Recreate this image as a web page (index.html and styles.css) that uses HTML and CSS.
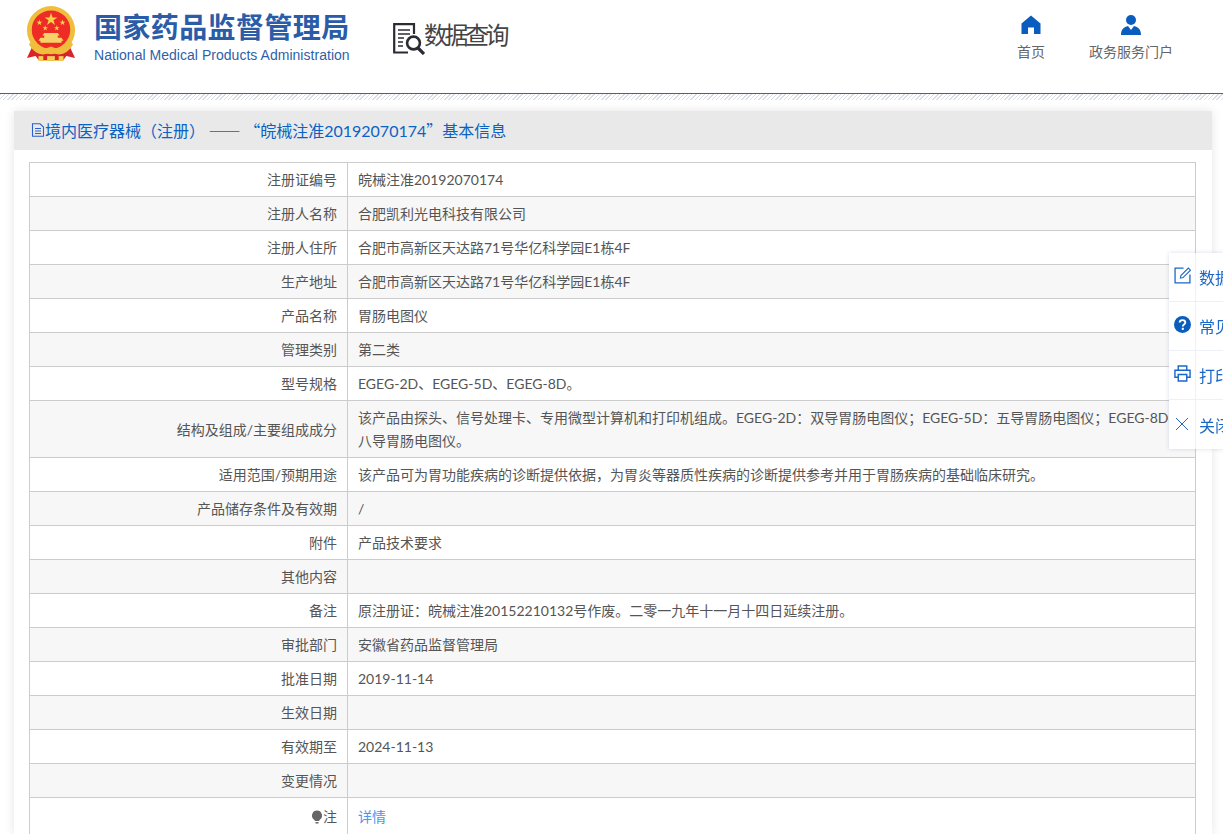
FILE: index.html
```html
<!DOCTYPE html>
<html lang="zh">
<head>
<meta charset="utf-8">
<title>境内医疗器械（注册）</title>
<link rel="stylesheet" href="styles.css">
</head>
<body>
<header class="top">
  <div class="brand">
    <svg class="emblem" viewBox="0 0 52 58" aria-hidden="true">
      <path d="M7 41 L1 54 L10 52 L14 57 L38 57 L42 52 L51 54 L45 41 Z" fill="#d9252a"/>
      <circle cx="26" cy="25" r="25" fill="#f0bd3c"/>
      <circle cx="26" cy="24.5" r="20" fill="#ee2c25"/>
      <path d="M26 7 l1.6 4.8 5 0 -4 3 1.5 4.8 -4.1 -3 -4.1 3 1.5 -4.8 -4 -3 5 0z" fill="#f8d24a"/>
      <path d="M14 14 l.8 2.2 2.3 0 -1.9 1.4 .7 2.2 -1.9 -1.4 -1.9 1.4 .7 -2.2 -1.9 -1.4 2.3 0z M38 14 l.8 2.2 2.3 0 -1.9 1.4 .7 2.2 -1.9 -1.4 -1.9 1.4 .7 -2.2 -1.9 -1.4 2.3 0z M20 20 l.7 2 2.1 0 -1.7 1.3 .6 2 -1.7 -1.2 -1.7 1.2 .6 -2 -1.7 -1.3 2.1 0z M32 20 l.7 2 2.1 0 -1.7 1.3 .6 2 -1.7 -1.2 -1.7 1.2 .6 -2 -1.7 -1.3 2.1 0z" fill="#f8d24a"/>
      <path d="M19 28 h14 l2 2.5 h-2 v2.5 h4 l2 3 h-2 v2 H15 v-2 h-2 l2 -3 h4 v-2.500 h-2z" fill="#f6d268"/>
      <path d="M6 36 Q13 48 26 42 Q39 48 46 36 L49 40 Q40 55 26 48 Q12 55 3 40Z" fill="#f0bd3c"/>
      <path d="M13 52 h26 v5 H13z" fill="#f3cf57"/>
      <path d="M18 52 h4 v4 h-4z M30 52 h4 v4 h-4z" fill="#d9252a"/>
    </svg>
    <div class="brand-text">
      <div class="brand-cn">国家药品监督管理局</div>
      <div class="brand-en">National Medical Products Administration</div>
    </div>
    <div class="query">
      <svg class="query-icon" viewBox="0 0 32 32" aria-hidden="true">
        <path d="M15 29.500 H1.200 V1.200 H21 V11" fill="none" stroke="#2b2b33" stroke-width="2.200"/>
        <path d="M5 7 H17 M5 11 H17 M5 15 H11 M5 19 H10 M5 23 H10" stroke="#2b2b33" stroke-width="1.600" fill="none"/>
        <circle cx="20.500" cy="20" r="6.400" fill="none" stroke="#2b2b33" stroke-width="2.600"/>
        <path d="M25 25 L31 31" stroke="#2b2b33" stroke-width="3.200"/>
      </svg>
      <span class="query-text">数据查询</span>
    </div>
  </div>
  <nav class="nav">
    <a class="nav-item nav-home">
      <svg class="nav-icon" viewBox="0 0 20 20" aria-hidden="true">
        <path d="M10 .5 L19.500 8.500 V19 H13 V12.500 H7 V19 H.5 V8.500 Z" fill="#0a5dbf"/>
      </svg>
      <span>首页</span>
    </a>
    <a class="nav-item nav-portal">
      <svg class="nav-icon" viewBox="0 0 20 20" aria-hidden="true">
        <circle cx="10" cy="5" r="5" fill="#0a5dbf"/>
        <path d="M0 20 C0 14 3 12 7 11 L10 15 L13 11 C17 12 20 14 20 20 Z" fill="#0a5dbf"/>
      </svg>
      <span>政务服务门户</span>
    </a>
  </nav>
</header>
<div class="hatch"></div>
<main class="panel">
  <h2 class="panel-title">
    <svg class="doc-icon" viewBox="0 0 14 14" aria-hidden="true">
      <path d="M1.500 .8 H9 L12.500 4 V13.200 H1.500 Z M4 5.500 H10 M4 8 H10 M4 10.500 H10" fill="none" stroke="#2a62c9" stroke-width="1.100"/>
    </svg><span>境内医疗器械（注册）<span class="cjk"> —— “</span>皖械注准20192070174<span class="cjk">”</span>基本信息</span>
  </h2>
  <div class="table-wrap">
    <table class="info">
      <tbody>
        <tr><th>注册证编号</th><td>皖械注准20192070174</td></tr>
        <tr><th>注册人名称</th><td>合肥凯利光电科技有限公司</td></tr>
        <tr><th>注册人住所</th><td>合肥市高新区天达路71号华亿科学园E1栋4F</td></tr>
        <tr><th>生产地址</th><td>合肥市高新区天达路71号华亿科学园E1栋4F</td></tr>
        <tr><th>产品名称</th><td>胃肠电图仪</td></tr>
        <tr><th>管理类别</th><td>第二类</td></tr>
        <tr><th>型号规格</th><td>EGEG-2D、EGEG-5D、EGEG-8D。</td></tr>
        <tr><th>结构及组成/主要组成成分</th><td>该产品由探头、信号处理卡、专用微型计算机和打印机组成。EGEG-2D：双导胃肠电图仪；EGEG-5D：五导胃肠电图仪；EGEG-8D：八导胃肠电图仪。</td></tr>
        <tr><th>适用范围/预期用途</th><td>该产品可为胃功能疾病的诊断提供依据，为胃炎等器质性疾病的诊断提供参考并用于胃肠疾病的基础临床研究。</td></tr>
        <tr><th>产品储存条件及有效期</th><td>/</td></tr>
        <tr><th>附件</th><td>产品技术要求</td></tr>
        <tr><th>其他内容</th><td></td></tr>
        <tr><th>备注</th><td>原注册证：皖械注准20152210132号作废。二零一九年十一月十四日延续注册。</td></tr>
        <tr><th>审批部门</th><td>安徽省药品监督管理局</td></tr>
        <tr><th>批准日期</th><td>2019-11-14</td></tr>
        <tr><th>生效日期</th><td></td></tr>
        <tr><th>有效期至</th><td>2024-11-13</td></tr>
        <tr><th>变更情况</th><td></td></tr>
        <tr><th><svg class="bulb" viewBox="0 0 12 14" aria-hidden="true"><path d="M6 .5 A5 5 0 0 1 9 9.500 L8 11 H4 L3 9.500 A5 5 0 0 1 6 .5Z M4.500 12 h3 v1.600 h-3z" fill="#666"/></svg>注</th><td><a class="link">详情</a></td></tr>
      </tbody>
    </table>
  </div>
</main>
<aside class="float">
  <a class="float-item">
    <span class="float-icon icon-edit"><svg viewBox="0 0 16 16" aria-hidden="true"><path d="M9 1 H1 V15 H15 V7" fill="none" stroke="#1a66c9" stroke-width="1.200"/><path d="M6 10.500 L6.500 8 L13.500 1 L15.500 3 L8.500 10Z" fill="none" stroke="#1a66c9" stroke-width="1"/></svg></span>
    <span class="float-text">数据</span>
  </a>
  <a class="float-item">
    <span class="float-icon"><svg viewBox="0 0 18 18" aria-hidden="true"><circle cx="9" cy="9" r="9" fill="#0a5dbf"/><path d="M6 7 C6 3.500 12 3.500 12 7 C12 9 9.300 9 9.300 11" fill="none" stroke="#fff" stroke-width="2"/><rect x="8.200" y="12.500" width="2.200" height="2.200" fill="#fff"/></svg></span>
    <span class="float-text">常见</span>
  </a>
  <a class="float-item">
    <span class="float-icon"><svg viewBox="0 0 18 18" aria-hidden="true"><path d="M4.500 5 V1 H13.500 V5 M4 13 H1 V5.500 H17 V13 H14 M4.500 10 H13.500 V17 H4.500Z" fill="none" stroke="#1a66c9" stroke-width="1.500"/></svg></span>
    <span class="float-text">打印</span>
  </a>
  <a class="float-item">
    <span class="float-icon icon-close"><svg viewBox="0 0 14 14" aria-hidden="true"><path d="M1 1 L13 13 M13 1 L1 13" stroke="#2a66c4" stroke-width="1"/></svg></span>
    <span class="float-text">关闭</span>
  </a>
</aside>
</body>
</html>
```
FILE: styles.css
```css
* { box-sizing: border-box; }
html, body { margin: 0; height: 100%; overflow: hidden; background: #fff; }
body { font-family: Lato, "Noto Sans CJK SC", sans-serif; font-size: 14px; color: #555; }

.top { height: 94px; display: flex; justify-content: space-between; border-bottom: 1px solid #2a6ab5; }
.brand { display: flex; align-items: flex-start; padding: 6px 0 0 26px; }
.emblem { width: 50px; height: 56px; flex: none; }
.brand-text { margin-left: 18px; width: 280px; }
.brand-cn { font-family: "Noto Sans CJK SC", sans-serif; font-size: 28px; font-weight: 700; line-height: 40px; letter-spacing: .4px; color: #2a5ca8; white-space: nowrap; }
.brand-en { font-family: "Liberation Sans", Arial, sans-serif; font-size: 14px; line-height: 19px; letter-spacing: .03px; color: #2f5fa9; white-space: nowrap; }
.query { display: flex; align-items: flex-start; margin-left: 19px; padding-top: 13px; }
.query-icon { width: 32px; height: 32px; flex: none; margin-top: 4px; }
.query-text { font-family: "Noto Sans CJK SC", sans-serif; font-size: 24px; line-height: 29px; letter-spacing: -3.5px; margin-left: -1px; color: #444; white-space: nowrap; }

.nav { display: flex; padding: 15px 50px 0 0; }
.nav-item { display: flex; flex-direction: column; align-items: center; font-size: 14px; line-height: 19px; color: #666; }
.nav-home { margin-right: 44px; }
.nav-icon { width: 20px; height: 20px; margin-bottom: 7px; }

.hatch { height: 6px; background: repeating-linear-gradient(135deg, #d8dde6 0 1px, #fff 1px 3px); }

.panel { margin: 11px 11px 0 14px; background: #fff; box-shadow: 0 0 10px rgba(0,0,0,.1); }
.panel-title { height: 39px; margin: 0; padding: 0 0 2px 17px; display: flex; align-items: center; background: #e9e9e9; font-size: 16px; font-weight: 400; color: #0b62c4; white-space: pre; }
.cjk { font-family: "Noto Sans CJK SC", sans-serif; }
.doc-icon { width: 14px; height: 14px; flex: none; }
.table-wrap { padding: 12px 16px 0 15px; }
.info { width: 100%; border-collapse: collapse; table-layout: fixed; }
.info tr:nth-child(even) { background: #f7f7f7; }
.info th, .info td { border: 1px solid #ccc; padding: 5px 10px; line-height: 23px; font-weight: 400; font-size: 14px; vertical-align: middle; }
.info th { width: 318px; text-align: right; }
.info td { text-align: left; height: 34px; }
.info tr:last-child th, .info tr:last-child td { height: 38px; }
.bulb { width: 12px; height: 14px; vertical-align: -2px; }
.link { color: #4b95f0; }

.float { position: fixed; left: 1169px; top: 253px; width: 120px; background: #fff; box-shadow: 0 0 4px rgba(60,80,160,.2); }
.float-item { display: flex; align-items: center; height: 49px; border-bottom: 1px solid #eef0f7; font-size: 16px; color: #1a66c9; white-space: nowrap; }
.float-item:last-child { border-bottom: 0; }
.float-icon { width: 27px; height: 100%; flex: none; display: flex; align-items: center; justify-content: center; border-right: 1px solid #eef0f7; margin-right: 3px; padding-bottom: 3px; }
.float-icon svg { width: 17px; height: 17px; }
.icon-edit { padding-bottom: 4px; }
.icon-close { padding-bottom: 1px; }
.icon-close svg { width: 14px; height: 14px; }
```
